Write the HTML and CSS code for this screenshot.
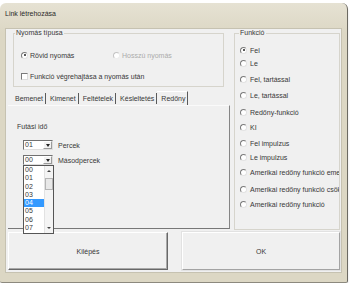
FILE: index.html
```html
<!DOCTYPE html>
<html lang="hu">
<head>
  <meta charset="UTF-8">
  <title>Link létrehozása</title>
  <link rel="stylesheet" href="styles.css">
</head>
<body>

<div class="window">
  <div class="titlebar">Link létrehozása</div>

  <div class="client">
    <div class="main">

      <div class="left">
        <fieldset class="frame press">
          <legend>Nyomás típusa</legend>
          <div class="press-row">
            <label class="opt short"><span class="radio on"></span>Rövid nyomás</label>
            <label class="opt off"><span class="radio"></span>Hosszú nyomás</label>
          </div>
          <label class="opt check-row"><span class="checkbox"></span>Funkció végrehajtása a nyomás után</label>
        </fieldset>

        <div class="tabs">
          <div class="tab-row">
            <span class="tab">Bemenet</span>
            <span class="tab">Kimenet</span>
            <span class="tab">Feltételek</span>
            <span class="tab">Késleltetés</span>
            <span class="tab active">Redőny</span>
          </div>
          <div class="panel">
            <div class="panel-title">Futási idő</div>
            <div class="combo-row first">
              <div class="combo"><span class="value">01</span><span class="arrow"></span></div>
              Percek
            </div>
            <div class="combo-row">
              <div class="combo"><span class="value">00</span><span class="arrow"></span></div>
              Másodpercek
              <div class="dropdown">
                <div class="items">
                  <div class="item">00</div>
                  <div class="item">01</div>
                  <div class="item">02</div>
                  <div class="item">03</div>
                  <div class="item selected">04</div>
                  <div class="item">05</div>
                  <div class="item">06</div>
                  <div class="item">07</div>
                </div>
                <div class="scrollbar">
                  <span class="sb-btn up"></span>
                  <span class="thumb"></span>
                  <span class="sb-btn down"></span>
                </div>
              </div>
            </div>
          </div>
        </div>
      </div>

      <fieldset class="frame func">
        <legend>Funkció</legend>
        <div class="func-list">
          <label class="opt"><span class="radio on"></span>Fel</label>
          <label class="opt"><span class="radio"></span>Le</label>
          <label class="opt"><span class="radio"></span>Fel, tartással</label>
          <label class="opt"><span class="radio"></span>Le, tartással</label>
          <label class="opt"><span class="radio"></span>Redőny-funkció</label>
          <label class="opt"><span class="radio"></span>KI</label>
          <label class="opt"><span class="radio"></span>Fel impulzus</label>
          <label class="opt"><span class="radio"></span>Le impulzus</label>
          <label class="opt"><span class="radio"></span>Amerikai redőny funkció eme</label>
          <label class="opt"><span class="radio"></span>Amerikai redőny funkció csök</label>
          <label class="opt"><span class="radio"></span>Amerikai redőny funkció</label>
        </div>
      </fieldset>

    </div>

    <div class="buttons">
      <div class="btn exit">Kilépés</div>
      <div class="btn ok">OK</div>
    </div>
  </div>
</div>

</body>
</html>
```
FILE: styles.css
```css
* {
  box-sizing: border-box;
}

body {
  margin: 0;
  background-color: #fff;
  font-family: "Liberation Sans", Arial, sans-serif;
  font-size: 7px;
  color: #383838;
}

/* Window chrome */
.window {
  margin-top: 3px;
  width: 348px;
  height: 280px;
  padding: 0 5px 9px 5px;
  display: flex;
  flex-direction: column;
  background: linear-gradient(#e6e2d3, #dcd7c4 30px, #dcd7c4);
  border-right: 1px solid #6c6a62;
  border-bottom: 1px solid #8c897e;
  border-radius: 6px 6px 2px 2px;
  box-shadow: 0 2px 2px rgba(0,0,0,0.15);
}

.titlebar {
  height: 25px;
  padding-top: 7px;
  line-height: 8px;
  color: #2a2a2a;
}

.client {
  height: 245px;
  padding: 0 1px 2px 2px;
  background-color: #f0f0f0;
  border: 1px solid #c6c2b1;
}

.main {
  display: flex;
  gap: 4px;
  height: 201px;
}

.left {
  width: 222px;
  display: flex;
  flex-direction: column;
}

/* Frames */
.frame {
  margin: 0;
  min-width: 0;
  border: 1px solid #d6d4cc;
}

.frame legend {
  padding: 0 1px;
  line-height: 8px;
}

.press {
  margin-left: 5px;
  width: 211px;
  height: 58px;
  padding: 13px 0 0 1px;
}

.press-row {
  display: flex;
  height: 10px;
  margin-left: 6px;
}

.opt {
  display: flex;
  align-items: center;
  gap: 2px;
  white-space: nowrap;
}

.short {
  width: 92px;
}

.off {
  color: #ababab;
}

.off .radio {
  border-color: #c4c4c4 #eee #eee #c4c4c4;
}

.check-row {
  height: 10px;
  margin: 11px 0 0 6px;
}

.radio {
  flex: none;
  position: relative;
  width: 7px;
  height: 7px;
  border-radius: 50%;
  background-color: #fff;
  border: 1px solid;
  border-color: #7a7a7a #e2e2e2 #e2e2e2 #7a7a7a;
}

.radio.on::after {
  content: "";
  position: absolute;
  left: 1.5px;
  top: 1.5px;
  width: 2px;
  height: 2px;
  border-radius: 50%;
  background-color: #222;
}

.checkbox {
  flex: none;
  width: 7px;
  height: 7px;
  background-color: #fff;
  border: 1px solid;
  border-color: #7a7a7a #dcdcdc #dcdcdc #7a7a7a;
}

/* Tabs */
.tabs {
  flex: 1;
  margin-top: 4px;
  display: flex;
  flex-direction: column;
}

.tab-row {
  display: flex;
  align-items: center;
  height: 14px;
  padding-left: 3px;
}

.tab {
  padding: 0 2px 0 4px;
  line-height: 11px;
  border-right: 1px solid #5a5a5a;
}

.tab.active {
  align-self: stretch;
  line-height: 14px;
  border-top: 1px solid #fff;
}

.panel {
  flex: 1;
  position: relative;
  margin-bottom: 1px;
  padding: 17px 0 0 9px;
  border-top: 1px solid #fafafa;
  border-right: 1px solid #858585;
  border-bottom: 1px solid #777;
}

.panel-title {
  line-height: 8px;
}

.combo-row {
  position: relative;
  display: flex;
  align-items: center;
  gap: 5px;
  height: 10px;
  margin: 5px 0 0 6px;
}

.combo-row.first {
  margin-top: 9px;
}

.combo {
  display: flex;
  justify-content: space-between;
  width: 30px;
  height: 10px;
  background-color: #fff;
  border: 1px solid;
  border-color: #707070 #dedede #dedede #707070;
}

.value {
  padding-left: 1px;
  line-height: 8px;
}

.arrow {
  display: flex;
  align-items: center;
  justify-content: center;
  width: 9px;
  height: 8px;
  background-color: #f2f2f2;
  border: 1px solid;
  border-color: #fff #9a9a9a #9a9a9a #fff;
}

.arrow::after {
  content: "";
  border-style: solid;
  border-width: 3px 2.5px 0;
  border-color: #222 transparent transparent;
}

/* Open drop-down list over the panel */
.dropdown {
  position: absolute;
  top: 10px;
  left: 0;
  z-index: 2;
  display: flex;
  width: 31px;
  height: 69px;
  background-color: #fff;
  border: 1px solid #555;
}

.items {
  flex: 1;
}

.item {
  height: 8.3px;
  line-height: 8.3px;
  padding-left: 1px;
}

.item.selected {
  background-color: #3399ff;
  color: #fff;
}

.scrollbar {
  position: relative;
  width: 9px;
  background-color: #f4f4f4;
  border-left: 1px solid #e2e2e2;
}

.sb-btn {
  position: absolute;
  left: 0;
  display: flex;
  align-items: center;
  justify-content: center;
  width: 8px;
  height: 8px;
}

.sb-btn.up { top: 1px; }
.sb-btn.down { bottom: 1px; }

.sb-btn.up::after {
  content: "";
  border-style: solid;
  border-width: 0 2px 2px;
  border-color: transparent transparent #444;
}

.sb-btn.down::after {
  content: "";
  border-style: solid;
  border-width: 2px 2px 0;
  border-color: #444 transparent transparent;
}

.thumb {
  position: absolute;
  top: 12px;
  left: 0;
  width: 8px;
  height: 12px;
  background-color: #e8e8e8;
  border: 1px solid #b5b5b5;
}

/* Funkció */
.func {
  width: 106px;
  height: 201px;
  padding: 7px 0 0 4px;
  overflow: hidden;
}

.func-list {
  display: grid;
  grid-template-rows: 13px 16px 16px 17px 15px 16px 14px 15px 17px 15px 12px;
  margin-left: 1px;
}

.func-list .opt {
  height: 12px;
  gap: 3px;
}

/* Buttons */
.buttons {
  display: flex;
  gap: 14px;
  height: 38px;
  margin-top: 2px;
}

.btn {
  display: flex;
  align-items: center;
  justify-content: center;
  border: 1px solid;
}

.exit {
  width: 160px;
  border-color: #fff #686868 #686868 #fff;
  box-shadow: inset -1px -1px 0 #a8a8a8;
}

.ok {
  width: 158px;
  border-color: #fff #a3a3a3 #a3a3a3 #fff;
  box-shadow: 0 0 0 1px #e2e2e2;
}
```
